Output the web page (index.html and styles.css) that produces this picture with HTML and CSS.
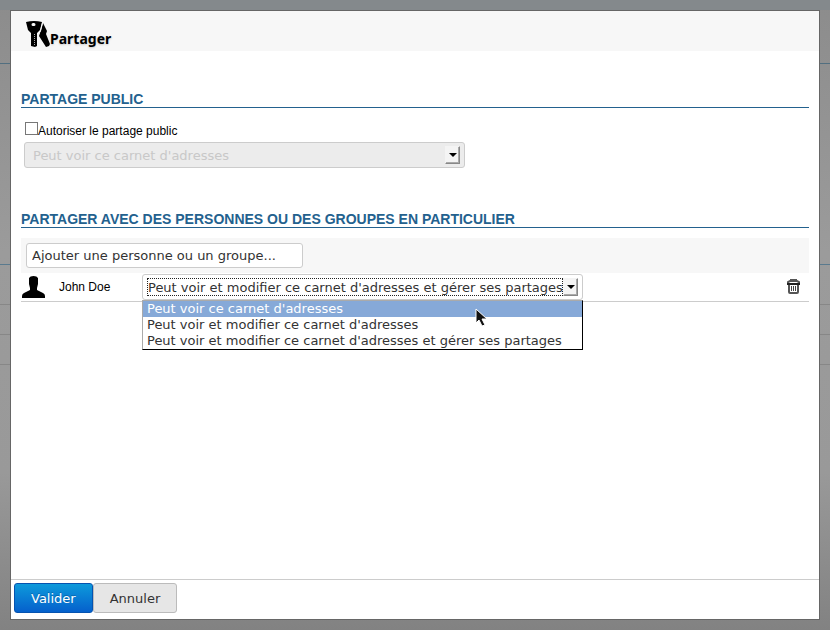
FILE: index.html
```html
<!DOCTYPE html>
<html lang="fr">
<head>
<meta charset="utf-8">
<title>Partager</title>
<link rel="stylesheet" href="styles.css">
</head>
<body>
<main class="dialog" role="dialog" aria-labelledby="dialog-title">
  <header class="dialog-header">
    <svg class="icon-keys" viewBox="0 0 24 27" width="24" height="27" aria-hidden="true">
      <path d="M17 2l4 8-1 3 4 10-1 2-3 1-7-11 2-6z"/>
      <path fill-rule="evenodd" d="M0 1q8-2 16 0l-2 8-3 3v13l-2 1-4-1V12L2 9zM7 2a1.500 1.500 0 0 0 0 3h1a1.500 1.500 0 0 0 0-3z"/>
      <path class="key-groove" d="M8.500 13v12"/>
      <path class="key-edge" d="M16.500 2l-2 8-2 3"/>
    </svg>
    <h1 id="dialog-title" class="dialog-title">Partager</h1>
  </header>
  <div class="dialog-body">
    <section class="section">
      <h2 class="section-title">PARTAGE PUBLIC</h2>
      <div class="public-share">
        <div class="check-line">
          <input class="check" type="checkbox" id="public">
          <label for="public">Autoriser le partage public</label>
        </div>
        <div class="select-box disabled">
          <select class="select" aria-label="Droits du partage public" disabled>
            <option>Peut voir ce carnet d'adresses</option>
          </select>
          <span class="arrow"></span>
        </div>
      </div>
    </section>
    <section class="section">
      <h2 class="section-title">PARTAGER AVEC DES PERSONNES OU DES GROUPES EN PARTICULIER</h2>
      <div class="add-bar">
        <input class="add-input" type="text" aria-label="Ajouter une personne ou un groupe" value="Ajouter une personne ou un groupe...">
      </div>
      <div class="person-row">
        <svg class="avatar" viewBox="0 0 23 22" width="23" height="22" aria-hidden="true">
          <path d="M7 2q1-2 4.500-2T16 2v6l-1 4v2l6 3q2 1 2 3v2H0v-2q0-2 2-3l6-3v-2L7 8z"/>
        </svg>
        <span class="person-name">John Doe</span>
        <div class="select-box open">
          <select class="select" aria-label="Droits de John Doe">
            <option>Peut voir et modifier ce carnet d'adresses et gérer ses partages</option>
          </select>
          <span class="focus-ring"></span>
          <span class="arrow"></span>
          <ul class="menu">
            <li class="menu-item selected">Peut voir ce carnet d'adresses</li>
            <li class="menu-item">Peut voir et modifier ce carnet d'adresses</li>
            <li class="menu-item">Peut voir et modifier ce carnet d'adresses et gérer ses partages</li>
          </ul>
          <svg class="cursor" viewBox="0 0 13 19" width="13" height="19" aria-hidden="true">
            <path d="M1 1v14l3-3 3 6 3-1-3-6h5z"/>
          </svg>
        </div>
        <button class="trash" type="button" aria-label="Supprimer">
          <svg viewBox="0 0 13 15" width="13" height="15" aria-hidden="true">
            <path class="trash-line" d="M4 2V1h5v1M1 4V3l2-1h7l2 1v1M2 5v8q0 1 1 1h7q1 0 1-1V5"/>
            <path class="trash-lid" d="M0 4h13v2H0z"/>
            <path class="trash-bars" d="M4.500 7v5M6.500 7v5M8.500 7v5"/>
          </svg>
        </button>
      </div>
    </section>
  </div>
  <footer class="dialog-footer">
    <button class="btn primary" type="submit">Valider</button>
    <button class="btn" type="button">Annuler</button>
  </footer>
</main>
</body>
</html>
```
FILE: styles.css
```css
* { box-sizing: border-box; }

body {
  margin: 0;
  min-height: 100vh;
  padding: 10px;
  display: flex;
  font: 12px/16px "Liberation Sans", Arial, sans-serif;
  color: #000;
  background:
    linear-gradient(#84898c, #84898c) 0 0 / 100% 10px no-repeat,
    linear-gradient(#526f80, #526f80) 0 63px / 100% 1px no-repeat,
    linear-gradient(#5a7a8e, #5a7a8e) 0 264px / 100% 1px no-repeat,
    linear-gradient(#878787, #878787) 0 304px / 100% 1px no-repeat,
    linear-gradient(#878787, #878787) 0 334px / 100% 1px no-repeat,
    linear-gradient(#878787, #878787) 0 364px / 100% 1px no-repeat,
    linear-gradient(#8c8c8c, #9b9b9b 40%, #999 75%, #828282);
}

.dialog {
  flex: 1;
  display: flex;
  flex-direction: column;
  border: 1px solid #666;
  background: #fff;
}

.dialog-header {
  display: flex;
  align-items: flex-start;
  height: 40px;
  padding: 10px 15px 0;
  background: #f7f7f7;
}

.key-groove { stroke: #aaa; stroke-dasharray: 1 1; }
.key-edge { fill: none; stroke: #f7f7f7; }

.dialog-title {
  margin: 8px 0 0;
  font: bold 14px/20px "Noto Sans", sans-serif;
  text-shadow: 0 1px 2px #ccc;
}

.dialog-body {
  flex: 1;
  padding: 40px 10px 0;
}

.section { margin-bottom: 43px; }

.section-title {
  margin: 0;
  font-size: 14px;
  line-height: 16px;
  color: #23618e;
  border-bottom: 1px solid #23618e;
}

.public-share { padding: 14px 3px 0; }

.check-line {
  display: flex;
  align-items: flex-end;
  height: 17px;
  margin-bottom: 3px;
}

.check {
  appearance: none;
  align-self: flex-start;
  width: 13px;
  height: 13px;
  margin: 0 0 0 1px;
  border: 1px solid #777;
  background: #fff;
}

.select-box {
  position: relative;
  width: 441px;
  height: 26px;
}

.select {
  display: block;
  appearance: none;
  width: 100%;
  height: 26px;
  padding: 2px 8px 0;
  border: 1px solid #ccc;
  border-radius: 3px;
  background: #fff;
  font: 13px/16px "DejaVu Sans", sans-serif;
  color: #333;
}

.open .select { padding: 2px 0 0 5px; }

.disabled .select {
  background: #ececec;
  color: #c8c8c8;
  opacity: 1;
}

.arrow {
  position: absolute;
  top: 4px;
  right: 5px;
  width: 15px;
  height: 18px;
  border: 1px solid;
  border-color: #f4f4f4 #888 #888 #f4f4f4;
  background: #f4f4f4;
  box-shadow: inset -1px -1px #aaa;
}

.arrow::before {
  content: "";
  position: absolute;
  top: 6px;
  left: 3px;
  border: solid transparent;
  border-width: 4px 4px 0;
  border-top-color: #000;
}

.focus-ring {
  position: absolute;
  inset: 4px 20px 4px 5px;
  border: 1px dotted #222;
  pointer-events: none;
}

.menu {
  position: absolute;
  top: 26px;
  left: 0;
  right: 0;
  margin: 0;
  padding: 0;
  list-style: none;
  border: 1px solid #000;
  border-top-color: #aaa;
  border-left-color: #aaa;
  background: #fff;
  font: 13px/16px "DejaVu Sans", sans-serif;
  color: #333;
}

.menu-item { padding: 0 4px; }

.selected {
  background: #86a9d8;
  color: #fff;
}

.cursor {
  position: absolute;
  top: 34px;
  left: 333px;
  fill: #111;
  stroke: #fff;
}

.add-bar {
  margin-top: 10px;
  padding: 5px;
  background: #f7f7f7;
}

.add-input {
  display: block;
  width: 277px;
  height: 25px;
  padding: 0 5px;
  border: 1px solid #ccc;
  border-radius: 3px;
  background: #fff;
  font: 13px/16px "DejaVu Sans", sans-serif;
  color: #333;
}

.person-row {
  display: flex;
  align-items: center;
  height: 29px;
  padding: 0 9px 0 1px;
  border-bottom: 1px solid #ccc;
}

.avatar { margin-right: 14px; }

.person-name { width: 83px; }

.trash {
  display: flex;
  margin-left: auto;
  padding: 0 0 2px;
  border: 0;
  background: none;
}

.trash-line { fill: none; stroke: #555; stroke-width: 2; }
.trash-lid { fill: #222; }
.trash-bars { stroke: #444; }

.dialog-footer {
  display: flex;
  padding: 3px 3px 6px;
  border-top: 1px solid #ccc;
}

.btn {
  height: 30px;
  padding: 2px 16px 0;
  border: 1px solid #bbb;
  border-radius: 3px;
  background: #e6e6e6;
  font: 13px/16px "DejaVu Sans", sans-serif;
  color: #333;
}

.primary {
  border-color: #0553b0;
  background: linear-gradient(#0d9adb, #0560cc);
  color: #fff;
  text-shadow: 0 -1px #0568b0;
}
```
